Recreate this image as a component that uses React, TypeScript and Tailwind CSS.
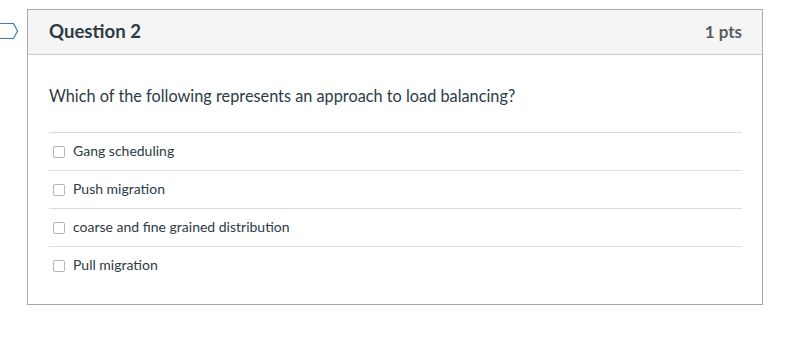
const answers = [
  "Gang scheduling",
  "Push migration",
  "coarse and fine grained distribution",
  "Pull migration",
];

function Flag() {
  return (
    <svg
      aria-hidden
      width="19"
      height="18"
      viewBox="0 0 19 18"
      className="absolute left-0 top-[22px]"
    >
      <path
        d="M-2 1.5 H13.5 L17.5 9 L13.5 16.5 H-2"
        fill="none"
        stroke="#3d7bb0"
        strokeWidth="1.2"
      />
    </svg>
  );
}

export default function App() {
  return (
    <div className="relative h-[338px] w-[808px] bg-white font-['Lato',sans-serif] text-[#2d3b45]">
      <Flag />
      <div className="ml-[27px] pt-[9px]">
        <div className="w-[736px] border border-[#a9a9a9] bg-white">
          <div className="flex h-[45px] items-center justify-between border-b border-[#c7cdd1] bg-[#f5f5f5] pl-[21px] pr-[20px]">
            <h2 className="text-[18.6px] font-bold">Question 2</h2>
            <span className="text-[17px] font-bold text-[#585c60]">1 pts</span>
          </div>
          <div className="pl-[21px] pr-[20px] pb-[20px]">
            <p className="pt-[31px] pb-[26px] text-[16.3px] leading-[20px]">
              Which of the following represents an approach to load balancing?
            </p>
            <ul>
              {answers.map((a) => (
                <li
                  key={a}
                  className="flex h-[38px] items-center gap-[8px] border-t border-[#dcdcdc] pl-[4px]"
                >
                  <span className="size-[12px] rounded-[2px] border border-[#b5b5b5] bg-white" />
                  <span className="mb-[3px] text-[14px]">{a}</span>
                </li>
              ))}
            </ul>
          </div>
        </div>
      </div>
    </div>
  );
}
